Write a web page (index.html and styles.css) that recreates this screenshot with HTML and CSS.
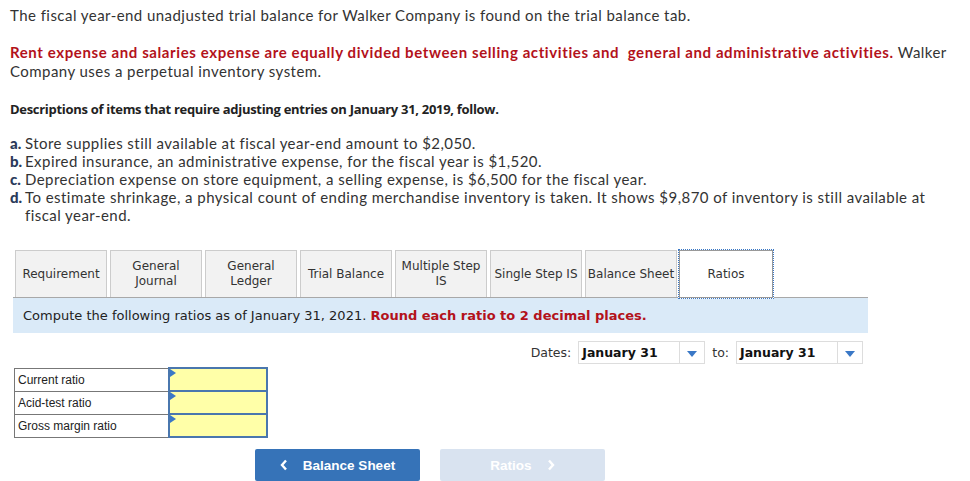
FILE: index.html
```html
<!DOCTYPE html>
<html>
<head>
<meta charset="utf-8">
<link rel="stylesheet" href="styles.css">
</head>
<body>
<div class="page">
  <p class="intro">The fiscal year-end unadjusted trial balance for Walker Company is found on the trial balance tab.</p>
  <p class="intro para2"><strong class="red">Rent expense and salaries expense are equally divided between selling activities and &nbsp;general and administrative activities.</strong> Walker Company uses a perpetual inventory system.</p>
  <p class="desc">Descriptions of items that require adjusting entries on January 31, 2019, follow.</p>
  <ol class="items">
    <li><b>a.</b><span>Store supplies still available at fiscal year-end amount to $2,050.</span></li>
    <li><b>b.</b><span>Expired insurance, an administrative expense, for the fiscal year is $1,520.</span></li>
    <li><b>c.</b><span>Depreciation expense on store equipment, a selling expense, is $6,500 for the fiscal year.</span></li>
    <li><b>d.</b><span>To estimate shrinkage, a physical count of ending merchandise inventory is taken. It shows $9,870 of inventory is still available at fiscal year-end.</span></li>
  </ol>

  <div class="tabs">
    <div class="tab">Requirement</div>
    <div class="tab">General<br>Journal</div>
    <div class="tab">General<br>Ledger</div>
    <div class="tab">Trial Balance</div>
    <div class="tab">Multiple Step<br>IS</div>
    <div class="tab">Single Step IS</div>
    <div class="tab">Balance Sheet</div>
    <div class="tab active">Ratios</div>
  </div>
  <div class="instr">Compute the following ratios as of January 31, 2021. <strong class="red">Round each ratio to 2 decimal places.</strong></div>

  <div class="dates">
    <span class="lbl">Dates:</span>
    <div class="select"><span>January 31</span><i class="arrow"></i></div>
    <span class="lbl to">to:</span>
    <div class="select"><span>January 31</span><i class="arrow"></i></div>
  </div>

  <table class="ratios">
    <tr><td class="name">Current ratio</td><td class="inp"><i class="flag"></i></td></tr>
    <tr><td class="name">Acid-test ratio</td><td class="inp"><i class="flag"></i></td></tr>
    <tr><td class="name">Gross margin ratio</td><td class="inp"><i class="flag"></i></td></tr>
  </table>

  <div class="nav">
    <div class="btn prev"><svg class="chev" width="8" height="12" viewBox="0 0 8 12"><polyline points="6,1.5 2,6 6,10.5" fill="none" stroke="#fff" stroke-width="2.4"/></svg>Balance Sheet</div>
    <div class="btn next">Ratios<svg class="chev" width="8" height="12" viewBox="0 0 8 12"><polyline points="2,1.5 6,6 2,10.5" fill="none" stroke="#fff" stroke-width="2.4"/></svg></div>
  </div>
</div>
</body>
</html>
```
FILE: styles.css
```css
html, body {
  margin: 0;
  padding: 0;
  background: #fff;
}
.page {
  padding: 6px 10px 0 10px;
  color: #333;
}
.intro {
  font-family: "Lato", "Open Sans", sans-serif;
  font-size: 15px;
  line-height: 19px;
  margin: 0;
  letter-spacing: 0.45px;
}
.para2 {
  margin-top: 18px;
}
.para2 .red {
  letter-spacing: 0.6px;
}
.red {
  color: #b3121b;
}
.desc {
  font-family: "Open Sans", sans-serif;
  font-weight: 700;
  font-size: 13px;
  letter-spacing: -0.3px;
  color: #222;
  margin: 20px 0 0 0;
  line-height: 16px;
}
.items {
  list-style: none;
  margin: 17px 0 0 0;
  padding: 0;
  font-family: "Lato", "Open Sans", sans-serif;
  font-size: 15px;
  line-height: 18px;
  letter-spacing: 0.45px;
}
.items li {
  display: flex;
  padding-right: 30px;
}
.items li b {
  flex: 0 0 15px;
  color: #2a3a5a;
  font-weight: 900;
  letter-spacing: 0;
}
.tabs {
  display: flex;
  gap: 3px;
  margin: 25px 0 0 5px;
  align-items: flex-end;
  font-family: "DejaVu Sans", Verdana, sans-serif;
  font-size: 12px;
  color: #333;
}
.tab {
  width: 92px;
  height: 47px;
  box-sizing: border-box;
  border: 1px solid #ccc;
  border-bottom: none;
  background: #f2f2f2;
  display: flex;
  align-items: center;
  justify-content: center;
  text-align: center;
  line-height: 15px;
}
.tab.active {
  background: #fff;
  width: 96px;
  height: 50px;
  margin-left: -2px;
  border: 1px dotted #3a78c6;
  box-shadow: inset 0 0 0 1px #999;
  margin-bottom: -2px;
  position: relative;
  z-index: 1;
}
.instr {
  margin-left: 3px;
  width: 855px;
  height: 36px;
  box-sizing: border-box;
  border-top: 1px solid #a8a8a8;
  background: #daeaf8;
  font-family: "DejaVu Sans", Verdana, sans-serif;
  font-size: 13px;
  color: #222;
  padding: 10px 0 0 10px;
}
.dates {
  display: flex;
  align-items: center;
  justify-content: flex-end;
  width: 853px;
  margin-top: 8px;
  gap: 6px;
  font-family: "DejaVu Sans", Verdana, sans-serif;
  font-size: 12.5px;
}
.dates .lbl {
  color: #333;
  margin-right: 1px;
}
.dates .to {
  margin-left: 1px;
}
.select {
  display: flex;
  width: 127px;
  height: 23px;
  box-sizing: border-box;
  border: 1px solid #ddd;
  font-weight: bold;
  color: #111;
  align-items: stretch;
}
.select span {
  flex: 1;
  padding: 3px 0 0 3px;
  font-size: 12.5px;
}
.select .arrow {
  width: 24px;
  border-left: 1px solid #ddd;
  position: relative;
}
.select .arrow::after {
  content: "";
  position: absolute;
  left: 7px;
  top: 9px;
  border-left: 5px solid transparent;
  border-right: 5px solid transparent;
  border-top: 6px solid #3a78c6;
}
.ratios {
  border-collapse: collapse;
  margin: 3px 0 0 4px;
  font-family: "Liberation Sans", Arial, sans-serif;
  font-size: 12px;
  color: #222;
}
.ratios td {
  border: 1px solid #777;
  height: 21px;
  padding: 0;
}
.ratios td.name {
  width: 150px;
  padding-left: 3px;
}
.ratios td.inp {
  width: 96px;
  background: #ffffa8;
  border: 2px solid #4a77ae;
  position: relative;
}
.flag {
  position: absolute;
  left: 0;
  top: 0;
  border-top: 4px solid transparent;
  border-bottom: 4px solid transparent;
  border-left: 6px solid #3a78c6;
}
.nav {
  display: flex;
  gap: 20px;
  margin: 11px 0 0 245px;
}
.btn {
  width: 165px;
  height: 32px;
  border-radius: 2px;
  display: flex;
  align-items: center;
  justify-content: center;
  font-family: "Liberation Sans", Arial, sans-serif;
  font-weight: bold;
  font-size: 13.5px;
  color: #fff;
}
.btn.prev {
  background: #3673b8;
}
.btn.next {
  background: #d9e3f0;
  color: #fff;
}
.chev {
  margin-right: 15px;
}
.btn.next .chev {
  margin: 0 0 0 15px;
}
```
